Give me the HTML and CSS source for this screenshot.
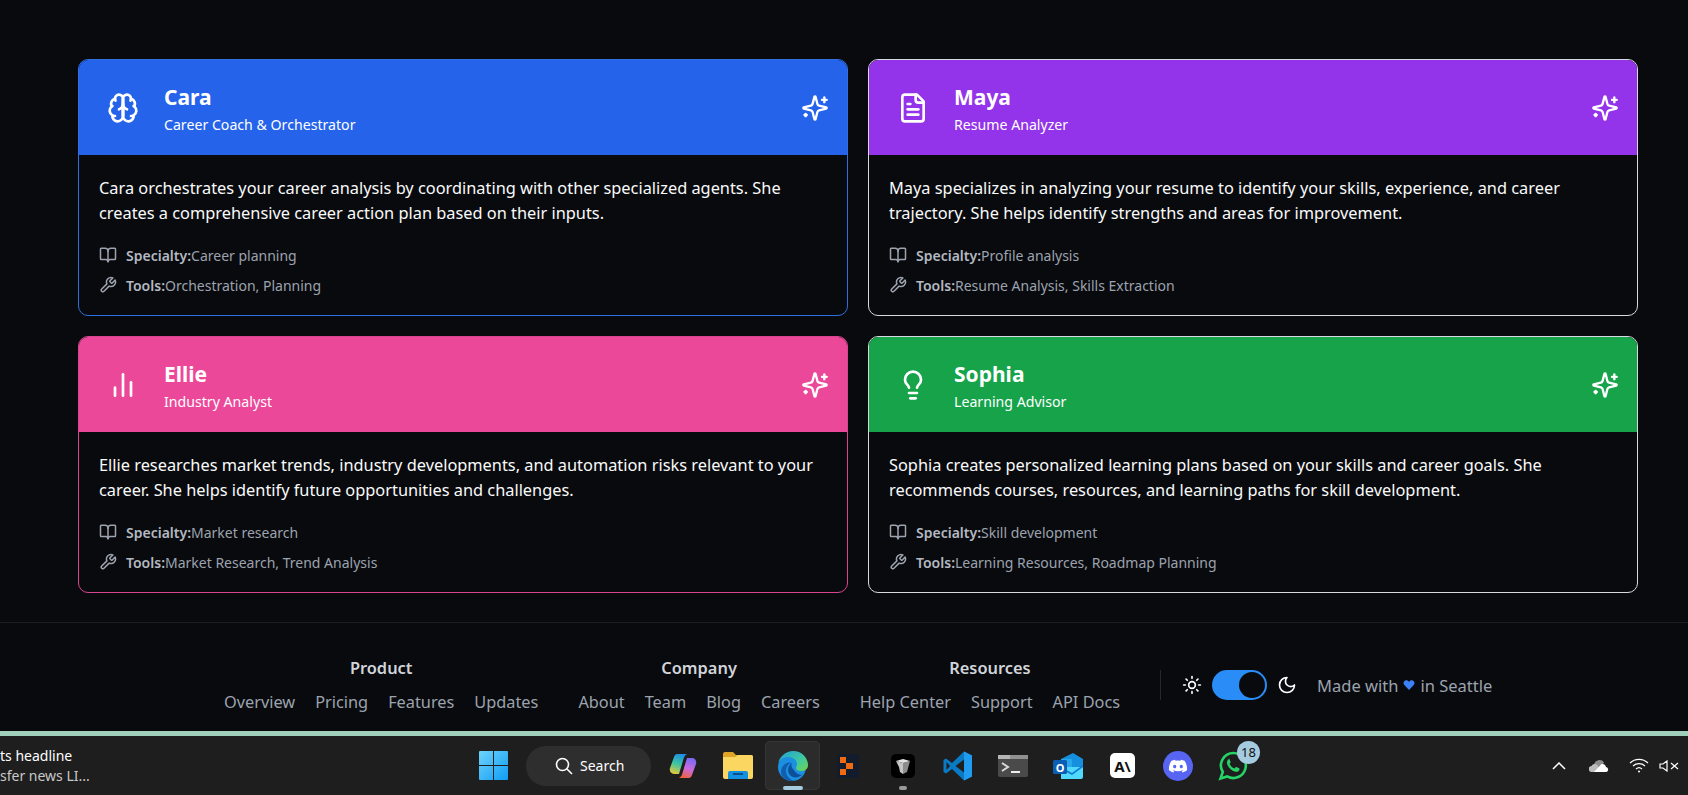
FILE: index.html
```html
<!DOCTYPE html>
<html lang="en">
<head>
  <meta charset="UTF-8">
  <meta name="viewport" content="width=device-width, initial-scale=1.0">
  <title>Agents</title>
  <link rel="stylesheet" href="styles.css">
</head>
<body>
  <svg class="sprite" xmlns="http://www.w3.org/2000/svg">
    <symbol id="i-brain" viewBox="0 0 24 24"><path d="M12 5a3 3 0 1 0-5.997.125 4 4 0 0 0-2.526 5.770 4 4 0 0 0 .556 6.588A4 4 0 1 0 12 18Z"/><path d="M12 5a3 3 0 1 1 5.997.125 4 4 0 0 1 2.526 5.770 4 4 0 0 1-.556 6.588A4 4 0 1 1 12 18Z"/><path d="M15 13a4.500 4.500 0 0 1-3-4 4.500 4.500 0 0 1-3 4"/><path d="M12 5v13"/><path d="M17.599 6.500a3 3 0 0 0 .399-1.375"/><path d="M6.003 5.125A3 3 0 0 0 6.401 6.500"/><path d="M3.477 10.896a4 4 0 0 1 .585-.396"/><path d="M19.938 10.500a4 4 0 0 1 .585.396"/><path d="M6 18a4 4 0 0 1-1.967-.516"/><path d="M19.967 17.484A4 4 0 0 1 18 18"/></symbol>
    <symbol id="i-file" viewBox="0 0 24 24"><path d="M15 2H6a2 2 0 0 0-2 2v16a2 2 0 0 0 2 2h12a2 2 0 0 0 2-2V7Z"/><path d="M14 2v4a2 2 0 0 0 2 2h4"/><path d="M10 9H8"/><path d="M16 13H8"/><path d="M16 17H8"/></symbol>
    <symbol id="i-chart" viewBox="0 0 24 24"><path d="M18 20V10"/><path d="M12 20V4"/><path d="M6 20v-6"/></symbol>
    <symbol id="i-bulb" viewBox="0 0 24 24"><path d="M15 14c.2-1 .7-1.700 1.500-2.500 1-.9 1.500-2.200 1.500-3.500A6 6 0 0 0 6 8c0 1 .2 2.200 1.500 3.500.7.7 1.300 1.500 1.500 2.500"/><path d="M9 18h6"/><path d="M10 22h4"/></symbol>
    <symbol id="i-spark" viewBox="0 0 24 24"><path d="M9.937 15.500A2 2 0 0 0 8.500 14.063l-6.135-1.582a.5.5 0 0 1 0-.962L8.500 9.936A2 2 0 0 0 9.937 8.500l1.582-6.135a.5.5 0 0 1 .963 0L14.063 8.500A2 2 0 0 0 15.500 9.937l6.135 1.581a.5.5 0 0 1 0 .964L15.500 14.063a2 2 0 0 0-1.437 1.437l-1.582 6.135a.5.5 0 0 1-.963 0z"/><path d="M20 3v4"/><path d="M22 5h-4"/><path d="M4 17v2"/><path d="M5 18H3"/></symbol>
    <symbol id="i-book" viewBox="0 0 24 24"><path d="M12 7v14"/><path d="M3 18a1 1 0 0 1-1-1V4a1 1 0 0 1 1-1h5a4 4 0 0 1 4 4 4 4 0 0 1 4-4h5a1 1 0 0 1 1 1v13a1 1 0 0 1-1 1h-6a3 3 0 0 0-3 3 3 3 0 0 0-3-3z"/></symbol>
    <symbol id="i-wrench" viewBox="0 0 24 24"><path d="M14.700 6.300a1 1 0 0 0 0 1.400l1.600 1.600a1 1 0 0 0 1.400 0l3.770-3.770a6 6 0 0 1-7.940 7.940l-6.910 6.910a2.120 2.120 0 0 1-3-3l6.910-6.910a6 6 0 0 1 7.940-7.940l-3.760 3.760z"/></symbol>
  </svg>

  <main class="agents">
    <article class="card card_blue">
      <header class="card-head">
        <div class="card-icon"><svg class="ico ico_32"><use href="#i-brain"/></svg></div>
        <div class="card-title">
          <h3>Cara</h3>
          <p>Career Coach &amp; Orchestrator</p>
        </div>
        <svg class="ico ico_28"><use href="#i-spark"/></svg>
      </header>
      <div class="card-body">
        <p class="desc">Cara orchestrates your career analysis by coordinating with other specialized agents. She creates a comprehensive career action plan based on their inputs.</p>
        <div class="meta"><svg class="ico ico_18"><use href="#i-book"/></svg><span><b>Specialty:</b>Career planning</span></div>
        <div class="meta"><svg class="ico ico_18"><use href="#i-wrench"/></svg><span><b>Tools:</b>Orchestration, Planning</span></div>
      </div>
    </article>

    <article class="card card_purple">
      <header class="card-head">
        <div class="card-icon"><svg class="ico ico_32"><use href="#i-file"/></svg></div>
        <div class="card-title">
          <h3>Maya</h3>
          <p>Resume Analyzer</p>
        </div>
        <svg class="ico ico_28"><use href="#i-spark"/></svg>
      </header>
      <div class="card-body">
        <p class="desc">Maya specializes in analyzing your resume to identify your skills, experience, and career trajectory. She helps identify strengths and areas for improvement.</p>
        <div class="meta"><svg class="ico ico_18"><use href="#i-book"/></svg><span><b>Specialty:</b>Profile analysis</span></div>
        <div class="meta"><svg class="ico ico_18"><use href="#i-wrench"/></svg><span><b>Tools:</b>Resume Analysis, Skills Extraction</span></div>
      </div>
    </article>

    <article class="card card_pink">
      <header class="card-head">
        <div class="card-icon"><svg class="ico ico_32"><use href="#i-chart"/></svg></div>
        <div class="card-title">
          <h3>Ellie</h3>
          <p>Industry Analyst</p>
        </div>
        <svg class="ico ico_28"><use href="#i-spark"/></svg>
      </header>
      <div class="card-body">
        <p class="desc">Ellie researches market trends, industry developments, and automation risks relevant to your career. She helps identify future opportunities and challenges.</p>
        <div class="meta"><svg class="ico ico_18"><use href="#i-book"/></svg><span><b>Specialty:</b>Market research</span></div>
        <div class="meta"><svg class="ico ico_18"><use href="#i-wrench"/></svg><span><b>Tools:</b>Market Research, Trend Analysis</span></div>
      </div>
    </article>

    <article class="card card_green">
      <header class="card-head">
        <div class="card-icon"><svg class="ico ico_32"><use href="#i-bulb"/></svg></div>
        <div class="card-title">
          <h3>Sophia</h3>
          <p>Learning Advisor</p>
        </div>
        <svg class="ico ico_28"><use href="#i-spark"/></svg>
      </header>
      <div class="card-body">
        <p class="desc">Sophia creates personalized learning plans based on your skills and career goals. She recommends courses, resources, and learning paths for skill development.</p>
        <div class="meta"><svg class="ico ico_18"><use href="#i-book"/></svg><span><b>Specialty:</b>Skill development</span></div>
        <div class="meta"><svg class="ico ico_18"><use href="#i-wrench"/></svg><span><b>Tools:</b>Learning Resources, Roadmap Planning</span></div>
      </div>
    </article>
  </main>

  <footer class="footer">
    <div class="foot-col">
      <h4>Product</h4>
      <div class="foot-links"><a>Overview</a><a>Pricing</a><a>Features</a><a>Updates</a></div>
    </div>
    <div class="foot-col">
      <h4>Company</h4>
      <div class="foot-links"><a>About</a><a>Team</a><a>Blog</a><a>Careers</a></div>
    </div>
    <div class="foot-col">
      <h4>Resources</h4>
      <div class="foot-links"><a>Help Center</a><a>Support</a><a>API Docs</a></div>
    </div>
    <div class="foot-side">
      <svg class="ico ico_20" viewBox="0 0 24 24"><circle cx="12" cy="12" r="4"/><path d="M12 2v2"/><path d="M12 20v2"/><path d="m4.930 4.930 1.410 1.410"/><path d="m17.660 17.660 1.410 1.410"/><path d="M2 12h2"/><path d="M20 12h2"/><path d="m6.340 17.660-1.410 1.410"/><path d="m19.070 4.930-1.410 1.410"/></svg>
      <div class="toggle"><span class="knob"></span></div>
      <svg class="ico ico_20" viewBox="0 0 24 24"><path d="M12 3a6 6 0 0 0 9 9 9 9 0 1 1-9-9Z"/></svg>
      <p class="made">Made with <svg class="heart" viewBox="0 0 24 24"><path d="M12 22 2.600 12.200C-.6 8.600 1.500 2.500 6.600 2.500c2.300 0 4.100 1.100 5.400 3.200 1.300-2.100 3.100-3.200 5.400-3.200 5.100 0 7.200 6.100 4 9.700z"/></svg> in Seattle</p>
    </div>
  </footer>

  <div class="strip"></div>

  <div class="taskbar">
    <div class="news">
      <span>ts headline</span>
      <span class="news-sub">sfer news LI...</span>
    </div>
    <div class="slot">
      <svg width="29" height="29" viewBox="0 0 29 29"><defs><linearGradient id="win" x1="0" y1="0" x2="1" y2="1"><stop offset="0" stop-color="#6fd3fb"/><stop offset="1" stop-color="#0f9cf5"/></linearGradient></defs><path fill="url(#win)" d="M1 0h13v14H0V1a1 1 0 0 1 1-1zm14 0h13a1 1 0 0 1 1 1v13H15zM0 15h14v14H1a1 1 0 0 1-1-1zm15 0h14v13a1 1 0 0 1-1 1H15z"/></svg>
    </div>
    <div class="search">
      <svg width="18" height="18" viewBox="0 0 18 18" fill="none" stroke="#fff" stroke-width="1.600"><circle cx="7.500" cy="7.500" r="6"/><path d="m12 12 5 5"/></svg>
      <span>Search</span>
    </div>
    <div class="slot">
      <svg width="28" height="28" viewBox="0 0 28 28"><defs><linearGradient id="cp1" x1="0.600" y1="0" x2="0.300" y2="1"><stop offset="0" stop-color="#1e8fe8"/><stop offset="0.500" stop-color="#3cc4a0"/><stop offset="1" stop-color="#e8c83a"/></linearGradient><linearGradient id="cp2" x1="0.600" y1="0" x2="0.300" y2="1"><stop offset="0" stop-color="#7a6af0"/><stop offset="0.500" stop-color="#c86ae0"/><stop offset="1" stop-color="#f0603a"/></linearGradient></defs><path fill="url(#cp1)" d="M8 2h10c-2 1-3 3-3.500 5L10 22H5c-3 0-5-3-4-6L5 5c.5-2 2-3 3-3z"/><path fill="url(#cp2)" d="M20 26H10c2-1 3-3 3.500-5L18 6h5c3 0 5 3 4 6l-4 11c-.5 2-2 3-3 3z"/></svg>
    </div>
    <div class="slot">
      <svg width="30" height="27" viewBox="0 0 30 27"><path fill="#e0a526" d="M0 2a2 2 0 0 1 2-2h8l3 3h15a2 2 0 0 1 2 2v4H0z"/><path fill="#fbd660" d="M0 5h12l3-2h13a2 2 0 0 1 2 2v20a2 2 0 0 1-2 2H2a2 2 0 0 1-2-2z"/><path fill="#1391e0" d="M5 21a2 2 0 0 1 2-2h16a2 2 0 0 1 2 2v6H5z"/><rect x="10" y="21" width="10" height="2" fill="#0a4f8a"/></svg>
    </div>
    <div class="slot slot_active">
      <svg width="30" height="30" viewBox="0 0 30 30"><defs><linearGradient id="edge" x1="0" y1="0" x2="1" y2="1"><stop offset="0" stop-color="#1f9fd8"/><stop offset="0.600" stop-color="#41c9a0"/><stop offset="1" stop-color="#6fd34c"/></linearGradient></defs><circle cx="14" cy="16" r="14" fill="#1b8fe0"/><path fill="url(#edge)" d="M15 0c9 0 15 7 15 14 0 4-3 6-7 6-3 0-5-1-5-3 0-1 1-2 1-4 0-4-4-7-9-7-4 0-8 2-10 6C2 5 8 0 15 0z"/><path fill="#0f5fae" d="M13 12c-3 1-5 4-5 8 0 5 4 9 9 10-6 1-10-1-13-5-2-4-1-9 3-12 2-1 4-2 6-1z"/><path fill="#0d4f9a" d="M24 24c-3 2-6 3-9 2-3-1-5-4-5-7 0-3 2-6 4-7-1 2-1 4 1 6 2 3 5 6 9 6z"/></svg>
      <i class="dot dot_blue"></i>
    </div>
    <div class="slot">
      <svg width="22" height="24" viewBox="0 0 22 24"><rect width="22" height="24" rx="2" fill="#121c2c"/><path fill="#f06a12" d="M3 3h6v6H3zM9 9h7v6H9zM3 15h6v6H3z"/></svg>
    </div>
    <div class="slot">
      <svg width="24" height="24" viewBox="0 0 24 24"><rect width="24" height="24" rx="5" fill="#000"/><path fill="#8c8c8c" d="M12 9l7-2-1.500 5.500L16 18l-4 2z"/><path fill="#e4e4e4" d="M5 7l7-2 7 2-7 2z"/><path fill="#c4c4c4" d="M5 7l7 2v11l-3-2-1-5z"/></svg>
      <i class="dot"></i>
    </div>
    <div class="slot">
      <svg width="30" height="30" viewBox="0 0 30 30"><path fill="#0a7ac4" fill-rule="evenodd" d="M21 .5 29 4.500v21L21 29.500 9 18l-6 4.500L.5 21V9L3 7.500 9 12zM21 8.500 12.500 15 21 21.500zM3.500 11v8L7 15z"/><path fill="#1f9cf0" fill-rule="evenodd" d="M21 .5 29 4.500v21L21 29.500 21 21.500V8.500z"/></svg>
    </div>
    <div class="slot">
      <svg width="30" height="22" viewBox="0 0 30 22"><rect width="30" height="22" rx="2" fill="#4a4a4a"/><rect width="30" height="4" fill="#909090"/><rect width="12" height="4" fill="#b5b5b5"/><path d="m4 8 6 4-6 4" fill="none" stroke="#d8d8d8" stroke-width="2"/><path d="M13 17h9" stroke="#eee" stroke-width="2"/></svg>
    </div>
    <div class="slot">
      <svg width="30" height="26" viewBox="0 0 30 26"><path fill="#1490df" d="M8 6 20 0l10 6v8H8z"/><path fill="#28a8ea" d="M8 6h11v8H8z"/><path fill="#50d9ff" d="M8 14h22v10a2 2 0 0 1-2 2H8z"/><path fill="#0f78d4" d="m8 14 11 6 11-8v2L19 22 8 16z"/><rect y="7" width="14" height="14" rx="1.500" fill="#0a5fb5"/><text x="7" y="18.500" text-anchor="middle" class="outlook-o">O</text></svg>
    </div>
    <div class="slot">
      <div class="anth">A\</div>
    </div>
    <div class="slot">
      <svg width="30" height="30" viewBox="0 0 30 30"><circle cx="15" cy="15" r="15" fill="#5865f2"/><path fill="#fff" d="M21.500 9.800A15 15 0 0 0 18 8.700l-.5 1a13 13 0 0 0-5 0l-.5-1a15 15 0 0 0-3.500 1.100C6.300 13 5.700 16.200 6 19.300a15 15 0 0 0 4.300 2.200l1-1.500-1.700-.8.4-.3a10 10 0 0 0 10 0l.4.3-1.700.8 1 1.500a15 15 0 0 0 4.300-2.200c.4-3.600-.6-6.700-2.500-9.500zM11.700 17.300c-.9 0-1.600-.8-1.600-1.800s.7-1.800 1.600-1.800 1.600.8 1.600 1.800-.7 1.800-1.600 1.800zm6.600 0c-.9 0-1.600-.8-1.600-1.800s.7-1.800 1.600-1.800 1.600.8 1.600 1.800-.7 1.800-1.600 1.800z"/></svg>
    </div>
    <div class="slot">
      <svg width="30" height="30" viewBox="0 0 30 30"><path fill="none" stroke="#25d366" stroke-width="2.600" d="M15.500 2A12.500 12.500 0 0 0 4.800 21L2.500 27.500l6.700-2.100A12.500 12.500 0 1 0 15.500 2z"/><path fill="#25d366" d="M10.500 8.500c-1.500 1-2 3-1 5.500 1.500 3 4 5.500 7 6.500 2.500.8 4.500 0 5-2 .2-.8 0-1-.5-1.300l-2.500-1.200c-.5-.2-.8 0-1.200.5l-.8 1c-2.200-.8-4-2.500-5-4.800l.8-.8c.4-.4.4-.8.2-1.200l-1-2.500c-.2-.5-.5-.5-1-.4z"/></svg>
      <span class="badge">18</span>
    </div>
    <div class="tray">
      <svg width="14" height="8" viewBox="0 0 14 8" fill="none" stroke="#fff" stroke-width="1.500"><path d="m1 7 6-6 6 6"/></svg>
      <svg width="20" height="13" viewBox="0 0 20 13"><path fill="#8f8f8f" d="M5 6a5.500 5.500 0 0 1 10-2.500L12 8z"/><path fill="#bdbdbd" d="M3 13a3 3 0 0 1-.5-6C3.500 5 7 4 9 7l3 2-3 4z"/><path fill="#fff" d="M5 13 12 5.500c2-1 4.500 0 5 2.500a2.600 2.600 0 0 1 .5 5z"/></svg>
      <svg width="20" height="15" viewBox="0 0 20 15" fill="none" stroke="#fff" stroke-width="1.300"><path d="M1 5a13 13 0 0 1 18 0"/><path d="M4 8a9 9 0 0 1 12 0"/><path d="M7 11a4.500 4.500 0 0 1 6 0"/><circle cx="10" cy="13.500" r="1" fill="#fff" stroke="none"/></svg>
      <svg width="20" height="12" viewBox="0 0 20 12" fill="none" stroke="#fff" stroke-width="1.200"><path d="M1 4h3l4-3v10L4 8H1z"/><path d="m12 3 7 6M19 3l-7 6"/></svg>
    </div>
  </div>
</body>
</html>
```

FILE: styles.css
```css
* {
  margin: 0;
  padding: 0;
  box-sizing: border-box;
}
body {
  display: flex;
  flex-direction: column;
  height: 795px;
  overflow: hidden;
  background-color: #090a0d;
  font-family: "Noto Sans", "Open Sans", sans-serif;
  color: #f9fafb;
}
.sprite {
  display: none;
}
.ico {
  flex: none;
  fill: none;
  stroke: currentColor;
  stroke-width: 2;
  stroke-linecap: round;
  stroke-linejoin: round;
}
.ico_32 {
  width: 32px;
  height: 32px;
}
.ico_28 {
  width: 28px;
  height: 28px;
}
.ico_20 {
  width: 20px;
  height: 20px;
  color: #fff;
}
.ico_18 {
  width: 18px;
  height: 18px;
}

/* cards */
.agents {
  display: grid;
  grid-template-columns: 1fr 1fr;
  gap: 20px;
  padding: 59px 50px 29px 78px;
}
.card {
  height: 257px;
  border: 1px solid #fff;
  border-radius: 10px;
  overflow: hidden;
}
.card_blue {
  border-color: #2f6fe0;
}
.card_purple {
  border-color: #d8d8e0;
}
.card_pink {
  border-color: #d8458f;
}
.card_green {
  border-color: #d8d8e0;
}
.card-head {
  display: flex;
  align-items: center;
  gap: 17px;
  height: 95px;
  padding: 0 18px 0 20px;
  color: #fff;
}
.card_blue .card-head {
  background-color: #2563eb;
}
.card_purple .card-head {
  background-color: #9333ea;
}
.card_pink .card-head {
  background-color: #ec4899;
}
.card_green .card-head {
  background-color: #16a34a;
}
.card-icon {
  display: flex;
  flex: none;
  align-items: center;
  justify-content: center;
  width: 48px;
  height: 48px;
}
.card-title {
  flex: 1;
  padding-top: 3px;
}
.card-title h3 {
  margin-bottom: 4px;
  font-size: 21px;
  line-height: 28px;
  font-weight: 700;
}
.card-title p {
  font-size: 14.150px;
  line-height: 20px;
}
.card-body {
  padding: 21px 20px 18px;
}
.desc {
  margin-bottom: 18px;
  font-size: 16.350px;
  line-height: 25px;
}
.meta {
  display: flex;
  align-items: center;
  gap: 9px;
  height: 22px;
  margin-bottom: 8px;
  font-size: 14px;
  color: #9ca3af;
}
.meta b {
  font-weight: 600;
  color: #b4b9c2;
}

/* footer */
.footer {
  display: flex;
  align-items: center;
  gap: 40px;
  height: 109px;
  padding: 16px 0 0 224px;
  border-top: 1px solid #1c1e24;
}
.foot-col h4 {
  margin-bottom: 10px;
  text-align: center;
  font-size: 16.400px;
  line-height: 24px;
  font-weight: 600;
  color: #d1d5db;
}
.foot-links {
  display: flex;
  gap: 20px;
  font-size: 16.320px;
  line-height: 24px;
  color: #9ca3af;
}
.foot-side {
  display: flex;
  align-items: center;
  height: 30px;
  padding-left: 21px;
  border-left: 1px solid #26282e;
}
.toggle {
  display: flex;
  justify-content: flex-end;
  align-items: center;
  width: 55px;
  height: 30px;
  margin: 0 10px;
  padding-right: 2px;
  border-radius: 15px;
  background-color: #2a8cf7;
}
.knob {
  width: 26px;
  height: 26px;
  border-radius: 50%;
  background-color: #090a0d;
}
.made {
  display: flex;
  align-items: center;
  gap: 5px;
  margin-left: 20px;
  font-size: 16.500px;
  color: #9ca3af;
}
.heart {
  width: 12px;
  height: 12px;
  fill: #3b82f6;
}

/* windows taskbar */
.strip {
  height: 5px;
  background-color: #9fcfbb;
}
.taskbar {
  display: flex;
  flex: 1;
  align-items: center;
  padding-right: 9px;
  background-color: #1e1e1e;
  color: #fff;
}
.news {
  display: flex;
  flex: none;
  flex-direction: column;
  width: 466px;
  font-size: 14px;
  line-height: 20px;
}
.news-sub {
  color: #c8c8c8;
}
.slot {
  position: relative;
  display: flex;
  flex: none;
  align-items: center;
  justify-content: center;
  width: 55px;
  height: 49px;
}
.slot_active {
  border-radius: 5px;
  background-color: #2b2b2b;
  box-shadow: inset 0 0 0 1px #363636;
}
.dot {
  position: absolute;
  left: 50%;
  bottom: 0;
  width: 8px;
  height: 4px;
  border-radius: 2px;
  background-color: #9a9a9a;
  transform: translateX(-50%);
}
.dot_blue {
  width: 20px;
  background-color: #a4cbe0;
}
.search {
  display: flex;
  flex: none;
  align-items: center;
  gap: 7px;
  width: 125px;
  height: 40px;
  margin: 0 4px 0 5px;
  padding-left: 29px;
  border-radius: 20px;
  background-color: #2e2e2e;
  font-size: 14px;
}
.anth {
  display: flex;
  align-items: center;
  justify-content: center;
  width: 25px;
  height: 25px;
  border-radius: 5px;
  background-color: #fff;
  color: #111;
  font-size: 15px;
  font-weight: 700;
}
.outlook-o {
  font-size: 11px;
  font-weight: 700;
  fill: #fff;
}
.badge {
  position: absolute;
  top: 0;
  left: 32px;
  width: 23px;
  height: 23px;
  border-radius: 50%;
  background-color: #a4cbe0;
  color: #111;
  font-size: 13px;
  line-height: 23px;
  text-align: center;
}
.tray {
  display: flex;
  align-items: center;
  gap: 10px;
  margin-left: auto;
}
.tray svg:nth-child(1) {
  margin-right: 13px;
}
.tray svg:nth-child(2) {
  margin-right: 10px;
}
```
